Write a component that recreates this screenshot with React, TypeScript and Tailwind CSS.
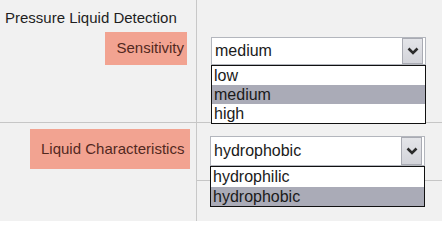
import React from "react"

function Chevron() {
  return (
    <svg width="12" height="8" viewBox="0 0 12 8">
      <path d="M1.5 1.5 L6 6 L10.5 1.5" fill="none" stroke="#2b2b2b" strokeWidth="2.6" />
    </svg>
  )
}

function Combo({
  value,
  options,
  w,
  tall,
}: {
  value: string
  options: string[]
  w: string
  tall?: boolean
}) {
  return (
    <div className={`relative ${w}`}>
      {/* closed box */}
      <div
        className={`${tall ? "h-[30px]" : "h-[28px]"} bg-white border border-[#b3b6bd] flex items-center justify-between pl-[3px] pr-[2px]`}
      >
        <span className="text-[16px] leading-none text-[#1a1a1a]">{value}</span>
        <div
          className={`w-[21px] ${tall ? "h-[28px]" : "h-[26px]"} bg-gradient-to-b from-[#e4e5e9] to-[#d3d4da] border border-[#a9abb3] flex items-center justify-center`}
        >
          <Chevron />
        </div>
      </div>
      {/* open list */}
      <div
        className={`absolute left-0 ${tall ? "top-[30px]" : "top-[28px]"} w-full bg-white border border-[#111]`}
      >
        {options.map((o) => (
          <div
            key={o}
            className={`${tall ? "h-[19.5px] leading-[19.5px]" : "h-[19px] leading-[19px]"} pl-[2px] text-[16px] text-[#1a1a1a] ${o === value ? "bg-[#aaabb7]" : ""}`}
          >
            {o}
          </div>
        ))}
      </div>
    </div>
  )
}

export default function App() {
  return (
    <div className="w-[442px] h-[221px] bg-[#f1f1f1] overflow-hidden font-['Liberation_Sans',Arial,sans-serif]">
      {/* Row 1 */}
      <div className="flex h-[123px] border-b border-[#c6c6c6]">
        <div className="w-[197px] border-r border-[#c8c8c8] flex flex-col">
          <div className="pl-[5px] pt-[9px] text-[15px] leading-[18px] text-[#1e1e1e]">Pressure Liquid Detection</div>
          <div className="flex justify-end pr-[9px] mt-[5px]">
            <div className="w-[82px] h-[33px] bg-[#f2a391] flex items-center justify-end pr-[3px] text-[15px] text-[#52291f]">
              Sensitivity
            </div>
          </div>
        </div>
        <div className="flex-1 pl-[14px] pt-[37px]">
          <Combo value="medium" options={["low", "medium", "high"]} w="w-[215px]" />
        </div>
      </div>

      {/* Row 2 */}
      <div className="flex h-[98px]">
        <div className="w-[197px] border-r border-[#c8c8c8] flex justify-end pr-[6px] pt-[6px]">
          <div className="w-[160px] h-[40px] bg-[#f2a391] flex items-center pl-[11px] text-[15px] text-[#52291f] whitespace-nowrap">
            Liquid Characteristics
          </div>
        </div>
        <div className="flex-1">
          <div className="h-[58px] border-b border-[#c6c6c6] pl-[13px] pt-[13px]">
            <Combo value="hydrophobic" options={["hydrophilic", "hydrophobic"]} w="w-[215px]" tall />
          </div>
        </div>
      </div>
    </div>
  )
}
